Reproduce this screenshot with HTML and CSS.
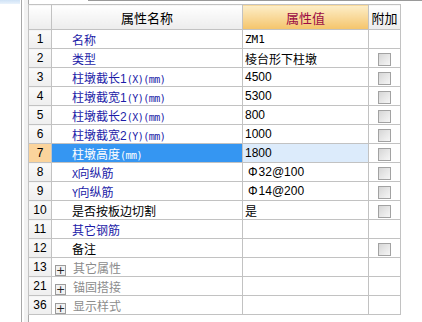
FILE: index.html
```
<!DOCTYPE html>
<html lang="zh-CN">
<head>
    <meta charset="UTF-8">
    <title>属性编辑</title>
    <link rel="stylesheet" href="styles.css">
</head>
<body>
    <div class="frame">
        <div class="side">
            <div class="side-top"></div>
        </div>
        <div class="splitter"></div>
        <div class="main">
            <div class="top-line"></div>
            <table class="grid">
                <colgroup>
                    <col class="c-num">
                    <col class="c-name">
                    <col class="c-value">
                    <col class="c-extra">
                </colgroup>
                <thead>
                    <tr>
                        <th class="h-num"></th>
                        <th class="h-name">属性名称</th>
                        <th class="h-value">属性值</th>
                        <th class="h-extra">附加</th>
                    </tr>
                </thead>
                <tbody>
                    <tr>
                        <td class="num">1</td>
                        <td class="name blue">名称</td>
                        <td class="value mono">ZM1</td>
                        <td class="extra"></td>
                    </tr>
                    <tr>
                        <td class="num">2</td>
                        <td class="name blue">类型</td>
                        <td class="value">棱台形下柱墩</td>
                        <td class="extra"><span class="check"></span></td>
                    </tr>
                    <tr>
                        <td class="num">3</td>
                        <td class="name blue">柱墩截长1<span class="unit">(X)(mm)</span></td>
                        <td class="value">4500</td>
                        <td class="extra"><span class="check"></span></td>
                    </tr>
                    <tr>
                        <td class="num">4</td>
                        <td class="name blue">柱墩截宽1<span class="unit">(Y)(mm)</span></td>
                        <td class="value">5300</td>
                        <td class="extra"><span class="check"></span></td>
                    </tr>
                    <tr>
                        <td class="num">5</td>
                        <td class="name blue">柱墩截长2<span class="unit">(X)(mm)</span></td>
                        <td class="value">800</td>
                        <td class="extra"><span class="check"></span></td>
                    </tr>
                    <tr>
                        <td class="num">6</td>
                        <td class="name blue">柱墩截宽2<span class="unit">(Y)(mm)</span></td>
                        <td class="value">1000</td>
                        <td class="extra"><span class="check"></span></td>
                    </tr>
                    <tr class="selected">
                        <td class="num">7</td>
                        <td class="name">柱墩高度<span class="unit">(mm)</span></td>
                        <td class="value">1800</td>
                        <td class="extra"><span class="check"></span></td>
                    </tr>
                    <tr>
                        <td class="num">8</td>
                        <td class="name blue"><span class="unit">X</span>向纵筋</td>
                        <td class="value"><span class="bar">Φ</span>32@100</td>
                        <td class="extra"><span class="check"></span></td>
                    </tr>
                    <tr>
                        <td class="num">9</td>
                        <td class="name blue"><span class="unit">Y</span>向纵筋</td>
                        <td class="value"><span class="bar">Φ</span>14@200</td>
                        <td class="extra"><span class="check"></span></td>
                    </tr>
                    <tr>
                        <td class="num">10</td>
                        <td class="name">是否按板边切割</td>
                        <td class="value">是</td>
                        <td class="extra"><span class="check"></span></td>
                    </tr>
                    <tr>
                        <td class="num">11</td>
                        <td class="name blue">其它钢筋</td>
                        <td class="value"></td>
                        <td class="extra"></td>
                    </tr>
                    <tr>
                        <td class="num">12</td>
                        <td class="name">备注</td>
                        <td class="value"></td>
                        <td class="extra"><span class="check"></span></td>
                    </tr>
                    <tr class="group">
                        <td class="num">13</td>
                        <td class="name"><span class="plus">+</span>其它属性</td>
                        <td class="value"></td>
                        <td class="extra"></td>
                    </tr>
                    <tr class="group">
                        <td class="num">21</td>
                        <td class="name"><span class="plus">+</span>锚固搭接</td>
                        <td class="value"></td>
                        <td class="extra"></td>
                    </tr>
                    <tr class="group">
                        <td class="num">36</td>
                        <td class="name"><span class="plus">+</span>显示样式</td>
                        <td class="value"></td>
                        <td class="extra"></td>
                    </tr>
                </tbody>
            </table>
        </div>
    </div>
</body>
</html>
```

FILE: styles.css
```
* {
    box-sizing: border-box;
}
body {
    margin: 0;
    background: #fff;
    font-family: "Liberation Sans", "Noto Sans CJK SC", sans-serif;
    font-size: 12px;
    color: #000;
}
.frame {
    display: flex;
    height: 322px;
}
.side {
    width: 20px;
}
.side-top {
    height: 4px;
    background: linear-gradient(to bottom, #cfe2f6, #eaf3fc);
}
.splitter {
    width: 8px;
    border-left: 1px solid #a8a8a8;
    border-right: 1px solid #a8a8a8;
    margin-left: 1px;
    margin-right: -1px;
    background: #f2f2f2;
    box-shadow: inset 2px 0 0 #fff;
}
.main {
    flex: 1;
    position: relative;
    padding-top: 4px;
}
.top-line {
    position: absolute;
    top: 0;
    left: 60px;
    right: 0;
    height: 1px;
    background: #9a9a9a;
}
.grid {
    border-collapse: collapse;
    table-layout: fixed;
    width: 372px;
}
.c-num { width: 23px; }
.c-name { width: 191px; }
.c-value { width: 126px; }
.c-extra { width: 32px; }
.grid th,
.grid td {
    border: 1px solid #c2c2c2;
    padding: 0;
    white-space: nowrap;
    overflow: hidden;
}
.grid th {
    height: 25px;
    font-weight: normal;
    font-size: 13px;
    background: linear-gradient(to bottom, #ffffff, #ececec);
}
.grid th.h-value {
    color: #9b0b45;
    background: linear-gradient(to bottom, #fdeec9, #f4c46a);
}
.grid td {
    height: 19px;
}
.num {
    text-align: center;
    background: linear-gradient(to bottom, #fafafa, #eeeeee);
}
.name {
    padding-left: 20px !important;
}
.value {
    padding-left: 2px !important;
}
.extra {
    text-align: center;
}
.blue {
    color: #1c1ca8;
}
.unit {
    font-family: "DejaVu Sans Mono", monospace;
    font-size: 10px;
    letter-spacing: -0.5px;
}
.mono {
    font-family: "DejaVu Sans Mono", monospace;
    font-size: 11px;
}
.bar {
    display: inline-block;
    margin: 0 1px 0 3px;
}
.check {
    display: inline-block;
    width: 13px;
    height: 13px;
    margin-top: 3px;
    vertical-align: top;
    border: 1px solid #a2a2a2;
    background: linear-gradient(135deg, #d6d6d6, #f6f6f6);
}
.selected .num {
    background: #fbd49c;
}
.selected .name {
    background: #3596f2;
    color: #fff;
}
.selected .value {
    background: #dcebfb;
}
.group .name {
    color: #8c8c8c;
    padding-left: 3px !important;
}
.plus {
    display: inline-block;
    width: 11px;
    height: 11px;
    margin-right: 7px;
    vertical-align: -1px;
    border: 1px solid #9c9c9c;
    background: #f2f2f2;
    color: #222;
    font-size: 11px;
    line-height: 9px;
    text-align: center;
    font-family: "DejaVu Sans", sans-serif;
}
```
